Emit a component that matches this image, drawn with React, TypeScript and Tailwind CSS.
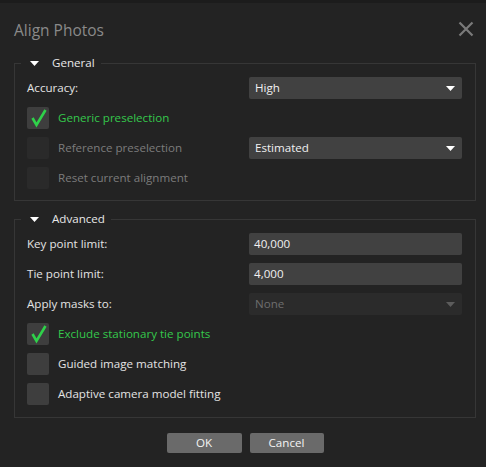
import React from "react";

const Arrow = ({ color = "#ffffff" }: { color?: string }) => (
  <svg width="9" height="5" viewBox="0 0 9 5" className="shrink-0">
    <path d="M0 0 H9 L4.5 5 Z" fill={color} />
  </svg>
);

const Check = () => (
  <svg width="22" height="22" viewBox="0 0 22 22">
    <path d="M5.5 11 L9.5 18 L18.5 3" fill="none" stroke="#2fd14a" strokeWidth="2.6" strokeLinejoin="miter" />
  </svg>
);

const CheckRow = ({ label, checked, disabled }: { label: string; checked?: boolean; disabled?: boolean }) => (
  <div className="flex items-center h-[22px]">
    <div className={`w-[22px] h-[22px] rounded-[2px] ${disabled ? "bg-[#2a2a2a]" : "bg-[#3e3e3e]"}`}>{checked && <Check />}</div>
    <span className={`ml-[9px] ${checked ? "text-[#35c84c]" : disabled ? "text-[#7c7c7c]" : "text-[#e4e4e4]"}`}>{label}</span>
  </div>
);

const Legend = ({ title }: { title: string }) => (
  <legend className="-ml-[6px] pl-[9px] pr-[6px] h-[16px] leading-[16px]">
    <span className="flex items-center">
      <Arrow />
      <span className="ml-[13px] text-[#e8e8e8]">{title}</span>
    </span>
  </legend>
);

const Select = ({ value, disabled }: { value: string; disabled?: boolean }) => (
  <div
    className={`w-[213px] h-[22px] rounded-[2px] flex items-center justify-between pl-[6px] pr-[7px] ${
      disabled ? "bg-[#2b2b2b] text-[#6e6e6e]" : "bg-[#414141] text-[#f0f0f0]"
    }`}
  >
    <span>{value}</span>
    <Arrow color={disabled ? "#5c5c5c" : "#ffffff"} />
  </div>
);

const Input = ({ value }: { value: string }) => (
  <div className="w-[213px] h-[22px] rounded-[2px] flex items-center pl-[5px] bg-[#414141] text-[#f0f0f0]">{value}</div>
);

const Row = ({ label, children, dim }: { label: string; children: React.ReactNode; dim?: boolean }) => (
  <div className="flex items-center h-[22px]">
    <span className={`flex-1 ${dim ? "text-[#7c7c7c]" : "text-[#e4e4e4]"}`}>{label}</span>
    {children}
  </div>
);

export default function App() {
  return (
    <div
      className="w-[486px] h-[467px] bg-[#232323] border-t-[3px] border-[#1c1c1c] flex flex-col text-[11.6px] leading-[16px]"
      style={{ fontFamily: '"Segoe UI", "Open Sans", sans-serif' }}
    >
      <div className="h-[52px] flex items-center justify-between pl-[14px] pr-[12px]">
        <span className="text-[15.5px] leading-[24px] text-[#8a8a8a] mt-[2px]">Align Photos</span>
        <svg width="16" height="16" viewBox="0 0 16 16">
          <path d="M1.5 1.5 L14.5 14.5 M14.5 1.5 L1.5 14.5" stroke="#7a7a7a" strokeWidth="2.2" />
        </svg>
      </div>

      <fieldset className="ml-[14px] mr-[10px] border border-[#363636] pl-[12px] pr-[13px] pt-[6px] pb-[11px] flex flex-col gap-[8px]">
        <Legend title="General" />
        <Row label="Accuracy:">
          <Select value="High" />
        </Row>
        <CheckRow label="Generic preselection" checked />
        <div className="flex items-center h-[22px]">
          <div className="flex-1">
            <CheckRow label="Reference preselection" disabled />
          </div>
          <Select value="Estimated" />
        </div>
        <CheckRow label="Reset current alignment" disabled />
      </fieldset>

      <fieldset className="mt-[10px] ml-[14px] mr-[10px] border border-[#363636] pl-[12px] pr-[13px] pt-[6px] pb-[12px] flex flex-col gap-[8px]">
        <Legend title="Advanced" />
        <Row label="Key point limit:">
          <Input value="40,000" />
        </Row>
        <Row label="Tie point limit:">
          <Input value="4,000" />
        </Row>
        <Row label="Apply masks to:">
          <Select value="None" disabled />
        </Row>
        <CheckRow label="Exclude stationary tie points" checked />
        <CheckRow label="Guided image matching" />
        <CheckRow label="Adaptive camera model fitting" />
      </fieldset>

      <div className="mt-[15px] flex justify-center gap-[8px] pl-[4px]">
        <button className="w-[75px] h-[20px] rounded-[2px] bg-[#6a6a6a] text-[#f4f4f4]">OK</button>
        <button className="w-[74px] h-[20px] rounded-[2px] bg-[#6a6a6a] text-[#f4f4f4]">Cancel</button>
      </div>
    </div>
  );
}
